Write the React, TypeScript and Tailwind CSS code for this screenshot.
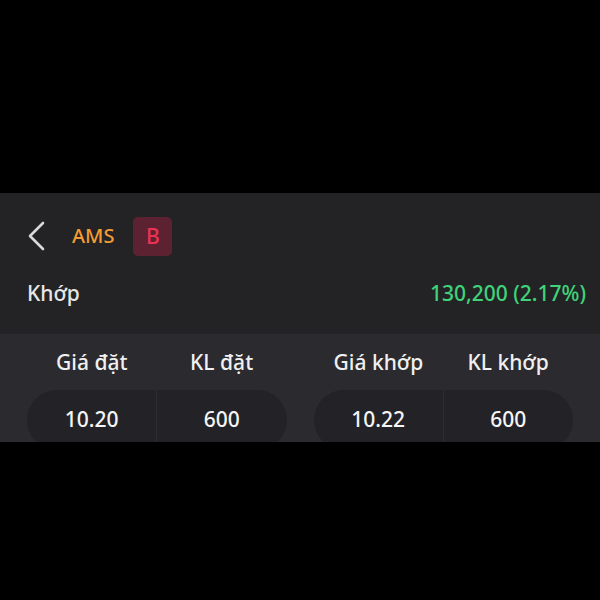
import React from "react";

export default function App() {
  const font = { fontFamily: '"Noto Sans", "Open Sans", sans-serif' };
  return (
    <div className="w-[600px] h-[600px] bg-black flex flex-col" style={font}>
      <div className="h-[193px] shrink-0" />
      <div className="h-[249px] shrink-0 flex flex-col overflow-hidden">
        <div className="bg-[#232325] h-[141px] shrink-0 flex flex-col">
          <div className="flex items-center h-[86px] shrink-0 pl-[26px]">
            <svg width="20" height="30" viewBox="0 0 20 30" className="mr-[26px]">
              <path d="M17 2 L4 15 L17 28" fill="none" stroke="#d9d9d9" strokeWidth="2.6" strokeLinecap="round" strokeLinejoin="round" />
            </svg>
            <span className="text-[20px] font-medium text-[#f39c33] mr-[19px] leading-none">AMS</span>
            <div className="w-[39px] h-[39px] rounded-[5px] bg-[#5c2232] flex items-center justify-center text-[21px] font-medium text-[#ec3254] leading-none">
              B
            </div>
          </div>
          <div className="flex items-center justify-between pl-[27px] pr-[14px] mt-[4px]">
            <span className="text-[21px] font-medium text-[#e6e6e6] leading-none">Khớp</span>
            <span className="text-[21px] font-medium text-[#3fd37a] leading-none">130,200 (2.17%)</span>
          </div>
        </div>
        <div className="bg-[#2a2a2f] flex-1 min-h-0 flex px-[27px] gap-[27px]">
          {[
            { h: ["Giá đặt", "KL đặt"], v: ["10.20", "600"] },
            { h: ["Giá khớp", "KL khớp"], v: ["10.22", "600"] },
          ].map((g, i) => (
            <div key={i} className="flex-1 flex flex-col">
              <div className="flex h-[56px] shrink-0 items-center pt-[1px]">
                {g.h.map((t) => (
                  <div key={t} className="flex-1 text-center text-[21px] font-medium text-[#f0f0f0] leading-none">
                    {t}
                  </div>
                ))}
              </div>
              <div className="flex h-[60px] shrink-0 bg-[#232327] rounded-[30px]">
                {g.v.map((t, j) => (
                  <div
                    key={j}
                    className={`flex-1 text-center text-[21px] font-medium text-[#f5f5f5] leading-none pt-[19px] ${j === 0 ? "border-r border-[#2c2c31]" : ""}`}
                  >
                    {t}
                  </div>
                ))}
              </div>
            </div>
          ))}
        </div>
      </div>
      <div className="flex-1" />
    </div>
  );
}
